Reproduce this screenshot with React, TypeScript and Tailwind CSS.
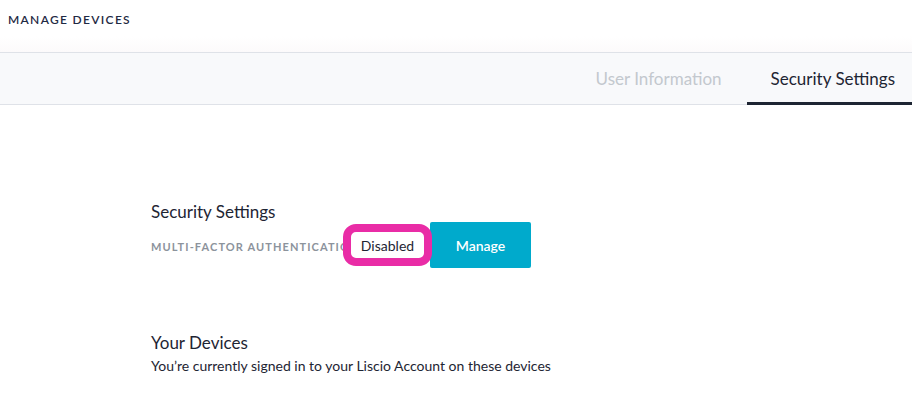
import React from 'react';

const font = { fontFamily: '"Source Sans Pro", Lato, "Noto Sans", sans-serif' };

export default function App() {
  return (
    <div className="min-h-screen bg-white text-[#1e2533]" style={font}>
      {/* Header */}
      <div className="h-[52px] flex items-start pt-[11px] px-2 bg-gradient-to-b from-white from-70% to-[#fcfafb]">
        <h1 className="text-[12px] font-semibold tracking-[0.11em] text-[#1f2a44] uppercase">
          Manage Devices
        </h1>
      </div>

      {/* Tabs */}
      <div className="h-[53px] bg-[#f8f9fb] border-y border-[#dfe2e8] flex justify-end items-stretch">
        <button className="pl-6 pr-[25px] text-[17px] text-[#c3c8ce] flex items-center">User Information</button>
        <button className="pl-6 pr-[17px] text-[17px] text-[#1e2533] flex items-center border-b-[3px] border-[#1e2533] pt-[3px] mb-[-1px]">
          Security Settings
        </button>
      </div>

      {/* Content */}
      <div className="pl-[151px] pt-[96px]">
        <h2 className="text-[17px] leading-[22px]">Security Settings</h2>
        <div className="flex items-center -mt-[1px]">
          <div className="w-[193px] whitespace-nowrap">
            <span className="text-[11px] font-bold tracking-[0.1em] text-[#8c939c] uppercase">
              Multi-Factor Authentication
            </span>
          </div>
          <span className="relative z-10 h-[42px] w-[89px] rounded-[13px] border-[8px] border-[#e92ca6] bg-white flex items-center justify-center text-[14px] text-[#1e2533] -ml-[1px]">
            Disabled
          </span>
          <button className="h-[46px] w-[101px] bg-[#00aacc] text-white text-[14px] font-semibold rounded-[2px] -ml-[2px]">
            Manage
          </button>
        </div>

        <h2 className="text-[17px] leading-[22px] mt-[64px]">Your Devices</h2>
        <p className="text-[14px] leading-[20px] mt-[2px] text-[#1e2533]">
          You’re currently signed in to your Liscio Account on these devices
        </p>
      </div>
    </div>
  );
}
